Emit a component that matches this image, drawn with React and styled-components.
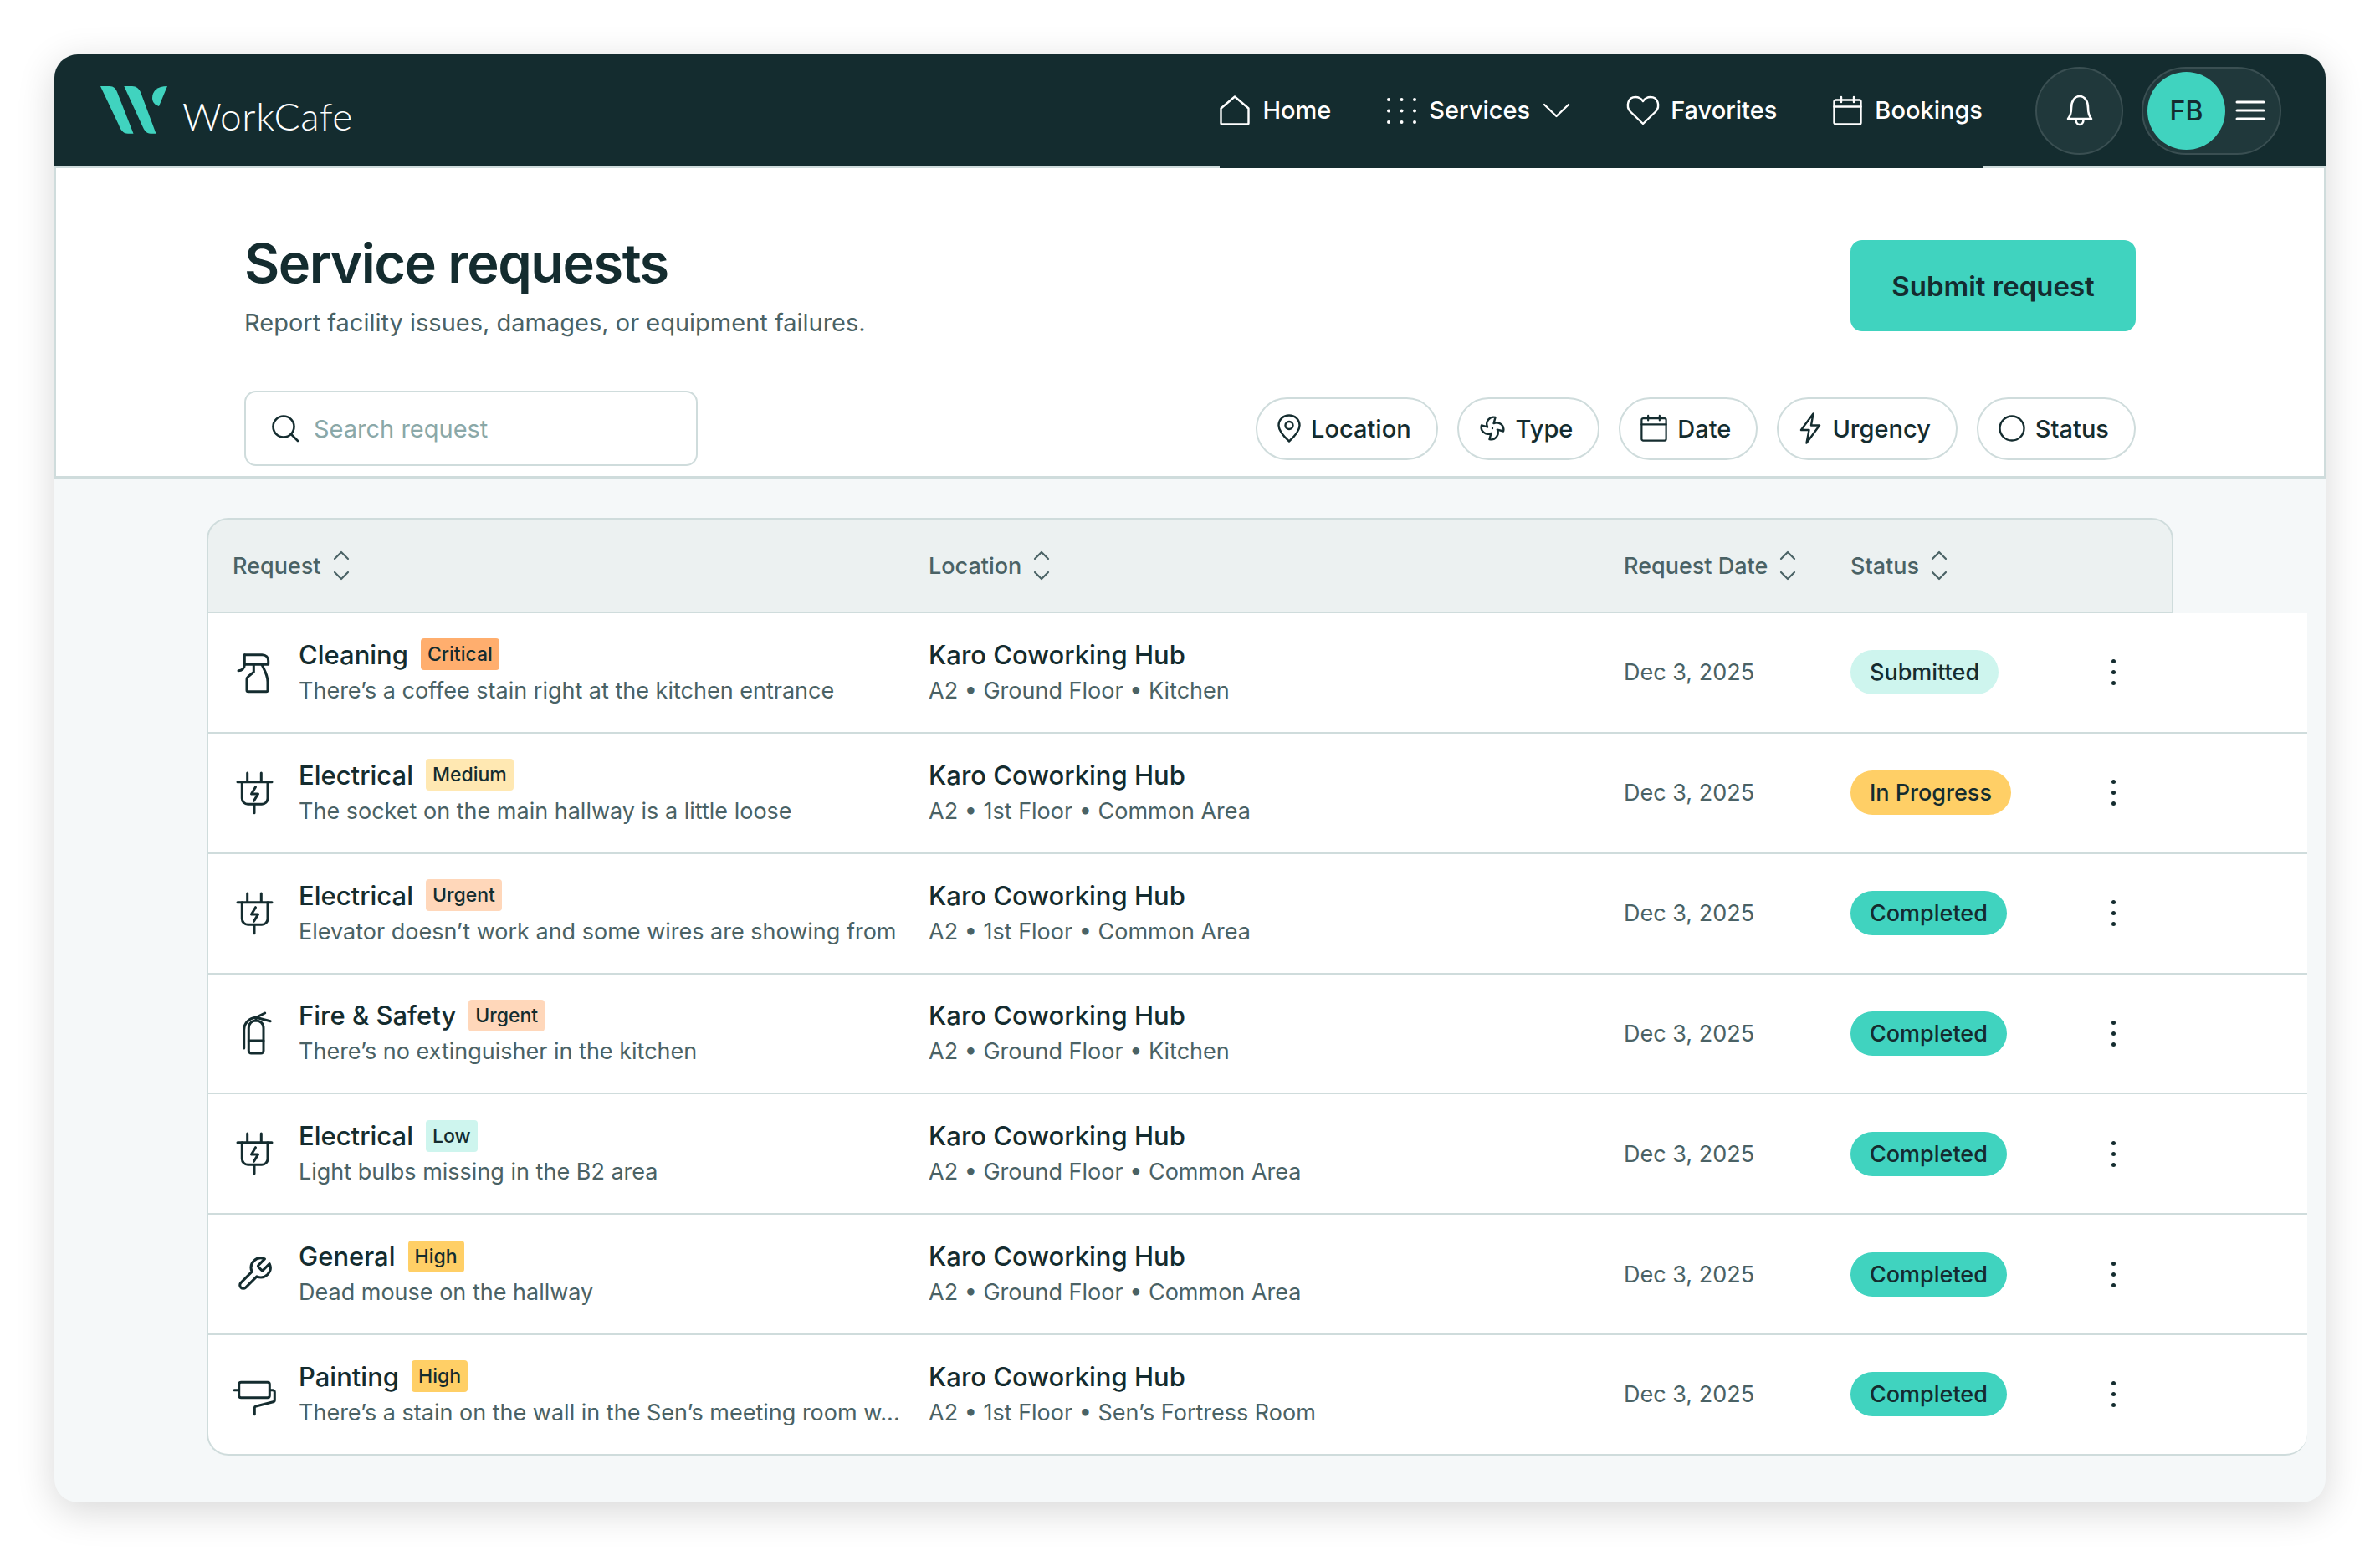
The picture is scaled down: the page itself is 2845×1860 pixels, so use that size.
import React from "react";
import styled, { createGlobalStyle } from "styled-components";

const DARK = "#142c2f";
const TEAL = "#40d3bf";
const GREY = "#4a6265";
const LINE = "#cfdcdc";

const Global = createGlobalStyle`
  html, body { margin: 0; padding: 0; background: #fff; }
  body { font-family: Inter, "Noto Sans", sans-serif; color: ${DARK}; width: 2845px; height: 1860px; overflow: hidden; }
  * { box-sizing: border-box; }
`;

const Page = styled.div`
  padding: 65px 65px 64px 65px;
`;
const Card = styled.div`
  width: 2715px;
  height: 1731px;
  border-radius: 28px;
  background: #f5f8f9;
  box-shadow: 0 10px 46px rgba(0, 0, 0, 0.16);
  display: flex;
  flex-direction: column;
`;
const Header = styled.header`
  height: 136px;
  background: ${DARK};
  border-radius: 28px 28px 0 0;
  border-bottom: 2px solid ${LINE};
  display: flex;
  align-items: center;
  padding: 0 53px 0 55px;
`;
const Brand = styled.div`
  display: flex;
  align-items: center;
  gap: 18px;
  margin-right: auto;
`;
const BrandName = styled.span`
  font-family: Lato, sans-serif;
  font-weight: 300;
  font-size: 46px;
  line-height: 58px;
  color: #fff;
  margin-top: 14px;
  letter-spacing: 0.6px;
`;
const Nav = styled.nav`
  display: flex;
  align-items: center;
  align-self: stretch;
  gap: 67px;
  margin-right: 63px;
  margin-bottom: -2px;
  border-bottom: 2px solid ${DARK};
`;
const NavItem = styled.a`
  display: flex;
  align-items: center;
  gap: ${(p) => p.$gap || 15}px;
  color: #fff;
  font-size: 29px;
  font-weight: 500;
  line-height: 40px;
`;
const IconBtn = styled.div`
  width: 105px;
  height: 105px;
  border-radius: 50%;
  background: #20383b;
  border: 2px solid #3a4f52;
  display: flex;
  align-items: center;
  justify-content: center;
  margin-right: 22px;
`;
const UserPill = styled.div`
  width: 167px;
  height: 105px;
  border-radius: 53px;
  background: #20383b;
  border: 2px solid #3a4f52;
  display: flex;
  align-items: center;
  padding-left: 5px;
  gap: 13px;
`;
const Avatar = styled.div`
  width: 93px;
  height: 93px;
  border-radius: 50%;
  background: ${TEAL};
  color: ${DARK};
  font-size: 32px;
  font-weight: 500;
  display: flex;
  align-items: center;
  justify-content: center;
`;
const Top = styled.section`
  height: 371px;
  background: #fff;
  border: solid ${LINE};
  border-width: 0 2px 3px 2px;
  padding: 86px 225px 0;
`;
const TitleRow = styled.div`
  display: flex;
  justify-content: space-between;
  align-items: flex-start;
`;
const Title = styled.h1`
  margin: 0;
  font-size: 65px;
  line-height: 56px;
  font-weight: 600;
  letter-spacing: -1.5px;
  color: ${DARK};
`;
const Subtitle = styled.p`
  margin: 23px 0 0;
  font-size: 29px;
  line-height: 40px;
  color: ${GREY};
`;
const SubmitButton = styled.button`
  width: 341px;
  height: 109px;
  border: 0;
  border-radius: 14px;
  background: ${TEAL};
  color: ${DARK};
  font-family: inherit;
  font-size: 33px;
  font-weight: 600;
`;
const Toolbar = styled.div`
  margin-top: 61px;
  display: flex;
  align-items: center;
  justify-content: space-between;
`;
const Search = styled.div`
  width: 542px;
  height: 90px;
  border: 2px solid ${LINE};
  border-radius: 14px;
  display: flex;
  align-items: center;
  padding-left: 30px;
  gap: 17px;
  font-size: 29px;
  color: #8aa8a8;
`;
const Filters = styled.div`
  display: flex;
  gap: 23px;
`;
const Filter = styled.div`
  height: 75px;
  border: 2px solid ${LINE};
  border-radius: 38px;
  display: flex;
  align-items: center;
  gap: 12px;
  padding: 0 30px 0 24px;
  font-size: 29px;
  font-weight: 500;
  color: ${DARK};
`;
const Body = styled.section`
  flex: 1;
  padding: 47px 22px 0 182px;
  display: flex;
  flex-direction: column;
`;
const COLUMNS = "832px 831px 271px 290px 1fr";
const TableHead = styled.div`
  width: 2351px;
  height: 114px;
  display: grid;
  grid-template-columns: ${COLUMNS};
  align-items: center;
  padding-left: 29px;
  background: #ecf1f1;
  border: 2px solid ${LINE};
  border-radius: 26px 26px 0 0;
`;
const HeadCell = styled.div`
  display: flex;
  align-items: center;
  gap: 14px;
  font-size: 27px;
  font-weight: 500;
  color: ${GREY};
`;
const Rows = styled.div`
  width: 2511px;
  background: #fff;
  border-radius: 0 0 26px 26px;
`;
const Row = styled.div`
  height: 143.85px;
  display: grid;
  grid-template-columns: ${COLUMNS};
  align-items: center;
  padding-left: 29px;
  border-left: 2px solid ${LINE};
  border-bottom: 2px solid ${LINE};
  &:last-child {
    border-radius: 0 0 0 26px;
    border-radius: 0 0 26px 26px;
  }
`;
const RequestCell = styled.div`
  display: flex;
  align-items: center;
  gap: 30px;
  margin-left: 3px;
`;
const IconSlot = styled.div`
  width: 46px;
  height: 50px;
  flex: none;
  display: flex;
  align-items: center;
  justify-content: center;
`;
const TextStack = styled.div`
  display: flex;
  flex-direction: column;
  min-width: 0;
`;
const TitleLine = styled.div`
  display: flex;
  align-items: center;
  gap: 15px;
  height: 41px;
  margin-bottom: 2px;
`;
const RowTitle = styled.span`
  font-size: 31px;
  font-weight: 500;
  color: ${DARK};
`;
const RowSub = styled.span`
  font-size: 27px;
  line-height: 41px;
  color: ${GREY};
  white-space: nowrap;
`;
const Badge = styled.span`
  height: 38px;
  padding: 0 8px;
  border-radius: 4px;
  font-size: 23px;
  font-weight: 500;
  display: flex;
  align-items: center;
  color: ${DARK};
  background: ${(p) => p.$bg};
`;
const DateCell = styled.div`
  font-size: 27px;
  color: ${GREY};
`;
const StatusPill = styled.span`
  display: inline-flex;
  align-items: center;
  height: 53px;
  padding: 0 23px;
  border-radius: 27px;
  font-size: 27px;
  font-weight: 500;
  color: ${DARK};
  background: ${(p) => p.$bg};
`;
const Kebab = styled.div`
  width: 8px;
  margin-left: 20px;
  display: flex;
  flex-direction: column;
  gap: 8px;
  align-items: center;
`;
const Dot = styled.i`
  width: 5px;
  height: 5px;
  border-radius: 50%;
  background: ${DARK};
`;

const Svg = ({ w = 46, h = 46, vw, vh, sw = 3, color = DARK, children }) => (
  <svg width={w} height={h} viewBox={`0 0 ${vw || w} ${vh || h}`} fill="none" stroke={color} strokeWidth={sw} strokeLinecap="round" strokeLinejoin="round" style={{ flex: "none", overflow: "visible" }}>
    {children}
  </svg>
);

const Logo = () => (
  <svg width="80" height="58" viewBox="0 0 80 58" fill={TEAL} style={{ flex: "none", marginTop: 0 }}>
    <path d="M0 0H11C16 0 18.500 3 20 7L39.500 56.700H33C27 56.700 24 52 21.700 45.700Z" />
    <path d="M28.300 0H38C43 0 46 3 48 7L66.500 56.700H60C55 56.700 52.500 53 50 47.300Z" />
    <path d="M80 0C68 0 62 6 62 14C62 19 65 22.500 70 24Z" />
  </svg>
);

const HomeIcon = () => (
  <Svg w={36} h={36} sw={2.4} color="#fff"><path d="M1.500 15.500L18 1.500L34.500 15.500V33.500A1 1 0 0 1 33.500 34.500H2.500A1 1 0 0 1 1.500 33.500Z" /></Svg>
);
const GridIcon = () => (
  <svg width="35" height="33" viewBox="0 0 35 33" fill="#fff" style={{ flex: "none" }}>
    {[2, 17.500, 33].flatMap((x) => [3, 16.500, 30].map((y) => <circle key={`${x}-${y}`} cx={x} cy={y} r="2" />))}
  </svg>
);
const ChevronDown = () => (
  <Svg w={33} h={20} sw={2.4} color="#fff"><path d="M2 3L16.500 17L31 3" /></Svg>
);
const HeartIcon = () => (
  <Svg w={40} h={36} sw={2.4} color="#fff"><path d="M20 34L5 19.500C-1 13 2 2 11 2C15 2 18 4 20 7C22 4 25 2 29 2C38 2 41 13 35 19.500Z" /></Svg>
);
const CalendarIcon = ({ color = "#fff", s = 35, sw = 2.4 }) => (
  <Svg w={s} h={s} vw={35} vh={35} sw={sw} color={color}>
    <rect x="1.500" y="4.500" width="32" height="29" rx="2" />
    <path d="M1.500 12.500H33.500M10 1V7M25 1V7" />
  </Svg>
);
const BellIcon = () => (
  <Svg w={34} h={38} sw={2.6} color="#fff">
    <path d="M3 29C6 25.500 7 22 7 16C7 8 11 2 17 2C23 2 27 8 27 16C27 22 28 25.500 31 29Z" />
    <path d="M12.500 30C12.500 33.500 14.500 36 17 36C19.500 36 21.500 33.500 21.500 30" />
  </Svg>
);
const MenuIcon = () => (
  <Svg w={34} h={26} sw={3} color="#fff"><path d="M1 3H33M1 13H33M1 23H33" /></Svg>
);
const SearchIcon = () => (
  <Svg w={34} h={34} sw={2.6}><circle cx="15" cy="15" r="12.500" /><path d="M24 24L32 32" /></Svg>
);
const PinIcon = () => (
  <Svg w={28} h={34} sw={2.4}><path d="M14 32.500C8 27 1.500 20.500 1.500 13.500C1.500 6.500 7 1.500 14 1.500C21 1.500 26.500 6.500 26.500 13.500C26.500 20.500 20 27 14 32.500Z" /><circle cx="14" cy="13.500" r="4.500" /></Svg>
);
const FanIcon = () => (
  <Svg w={32} h={32} vw={24} vh={24} sw={1.8}>
    <path d="M10.827 16.379a6.082 6.082 0 0 1-8.618-7.002l5.412 1.45a6.082 6.082 0 0 1 7.002-8.618l-1.45 5.412a6.082 6.082 0 0 1 8.618 7.002l-5.412-1.45a6.082 6.082 0 0 1-7.002 8.618l1.45-5.412Z" />
    <path d="M12 12v.01" />
  </Svg>
);
const BoltIcon = () => (
  <Svg w={28} h={38} sw={2.4}><path d="M17.500 1.500L3 21H12.500L9.500 36.500L25 15.500H15Z" /></Svg>
);
const RingIcon = () => (
  <Svg w={32} h={32} sw={2.4}><circle cx="16" cy="16" r="14.500" /></Svg>
);
const SortIcon = () => (
  <Svg w={20} h={36} sw={2.2} color={GREY}><path d="M2 10L10 2L18 10M2 26L10 34L18 26" /></Svg>
);

const SprayIcon = () => (
  <Svg>
    <path d="M11.300 1.700H32.300C37 1.700 39.700 5 39.700 9V13.300H12.300" />
    <path d="M11.300 1.700V14C11.300 18 8 20.700 4 20.700" />
    <path d="M22.300 13.300V22.300L16 27.500C14.700 28.500 14 30 14 31.500V44A1.700 1.700 0 0 0 15.700 45.700H37.300A1.700 1.700 0 0 0 39 44V34C39 26 35 20 32 13.300" />
  </Svg>
);
const PlugIcon = () => (
  <Svg h={50}>
    <path d="M14.700 1V11.700M31.300 1V11.700M3 11.700H44" />
    <path d="M8.300 11.700V31.300A7 7 0 0 0 15.300 38.300H32A7 7 0 0 0 39 31.300V11.700" />
    <path d="M23 38.300V48.700" />
    <path d="M24.500 17.700L19.500 26H27.500L22.500 34.300" />
  </Svg>
);
const ExtinguisherIcon = () => (
  <Svg h={50}>
    <path d="M16.300 44V19C16.300 13.500 20 10 25 10S34 13.500 34 19V46A3 3 0 0 1 31 49H19.300A3 3 0 0 1 16.300 46Z" />
    <path d="M16.300 34H34" />
    <path d="M10.700 43V21C10.700 13 17 7 25 6.300" />
    <path d="M35.700 1L25 6.300L42.300 10.700" />
    <path d="M25 6.300V10" />
  </Svg>
);
const WrenchIcon = () => (
  <Svg w={46} h={46} vw={24} vh={24} sw={1.6}>
    <path d="M14.700 6.300a1 1 0 0 0 0 1.400l1.600 1.600a1 1 0 0 0 1.400 0l3.770-3.770a6 6 0 0 1-7.940 7.940l-6.910 6.910a2.120 2.120 0 0 1-3-3l6.910-6.910a6 6 0 0 1 7.940-7.940l-3.760 3.760z" />
  </Svg>
);
const RollerIcon = () => (
  <Svg w={50} h={50}>
    <rect x="6.700" y="10.300" width="36.600" height="18.400" rx="2.500" />
    <path d="M1 19.700H6.700M43.300 19.700H47A2.300 2.300 0 0 1 49.300 22V31.500A2.300 2.300 0 0 1 47.500 33.800L27 39C26 39.300 25.300 40 25.300 41V48.700" />
  </Svg>
);

const BADGE = {
  Critical: "#ffae6e",
  Medium: "#ffe8b2",
  Urgent: "#ffd7ba",
  Low: "#cef5ee",
  High: "#ffcf66",
};
const STATUS = {
  Submitted: "#cef5ee",
  "In Progress": "#ffcf66",
  Completed: TEAL,
};

const rows = [
  { Icon: SprayIcon, title: "Cleaning", badge: "Critical", sub: "There’s a coffee stain right at the kitchen entrance", place: "A2 • Ground Floor • Kitchen", status: "Submitted" },
  { Icon: PlugIcon, title: "Electrical", badge: "Medium", sub: "The socket on the main hallway is a little loose", place: "A2 • 1st Floor • Common Area", status: "In Progress" },
  { Icon: PlugIcon, title: "Electrical", badge: "Urgent", sub: "Elevator doesn’t work and some wires are showing from", place: "A2 • 1st Floor • Common Area", status: "Completed" },
  { Icon: ExtinguisherIcon, title: "Fire & Safety", badge: "Urgent", sub: "There’s no extinguisher in the kitchen", place: "A2 • Ground Floor • Kitchen", status: "Completed" },
  { Icon: PlugIcon, title: "Electrical", badge: "Low", sub: "Light bulbs missing in the B2 area", place: "A2 • Ground Floor • Common Area", status: "Completed" },
  { Icon: WrenchIcon, title: "General", badge: "High", sub: "Dead mouse on the hallway", place: "A2 • Ground Floor • Common Area", status: "Completed" },
  { Icon: RollerIcon, title: "Painting", badge: "High", sub: "There’s a stain on the wall in the Sen’s meeting room w...", place: "A2 • 1st Floor • Sen’s Fortress Room", status: "Completed" },
];

export default function App() {
  return (
    <Page>
      <Global />
      <Card>
        <Header>
          <Brand>
            <Logo />
            <BrandName>WorkCafe</BrandName>
          </Brand>
          <Nav>
            <NavItem><HomeIcon />Home</NavItem>
            <NavItem><GridIcon />Services<ChevronDown /></NavItem>
            <NavItem $gap={13}><HeartIcon />Favorites</NavItem>
            <NavItem><CalendarIcon />Bookings</NavItem>
          </Nav>
          <IconBtn><BellIcon /></IconBtn>
          <UserPill>
            <Avatar>FB</Avatar>
            <MenuIcon />
          </UserPill>
        </Header>
        <Top>
          <TitleRow>
            <div>
              <Title>Service requests</Title>
              <Subtitle>Report facility issues, damages, or equipment failures.</Subtitle>
            </div>
            <SubmitButton>Submit request</SubmitButton>
          </TitleRow>
          <Toolbar>
            <Search><SearchIcon />Search request</Search>
            <Filters>
              <Filter><PinIcon />Location</Filter>
              <Filter><FanIcon />Type</Filter>
              <Filter><CalendarIcon color={DARK} s={32} />Date</Filter>
              <Filter><BoltIcon />Urgency</Filter>
              <Filter><RingIcon />Status</Filter>
            </Filters>
          </Toolbar>
        </Top>
        <Body>
          <TableHead>
            <HeadCell>Request<SortIcon /></HeadCell>
            <HeadCell>Location<SortIcon /></HeadCell>
            <HeadCell>Request Date<SortIcon /></HeadCell>
            <HeadCell>Status<SortIcon /></HeadCell>
          </TableHead>
          <Rows>
            {rows.map((r, i) => (
              <Row key={i}>
                <RequestCell>
                  <IconSlot><r.Icon /></IconSlot>
                  <TextStack>
                    <TitleLine>
                      <RowTitle>{r.title}</RowTitle>
                      <Badge $bg={BADGE[r.badge]}>{r.badge}</Badge>
                    </TitleLine>
                    <RowSub>{r.sub}</RowSub>
                  </TextStack>
                </RequestCell>
                <TextStack>
                  <TitleLine><RowTitle>Karo Coworking Hub</RowTitle></TitleLine>
                  <RowSub>{r.place}</RowSub>
                </TextStack>
                <DateCell>Dec 3, 2025</DateCell>
                <div><StatusPill $bg={STATUS[r.status]}>{r.status}</StatusPill></div>
                <Kebab><Dot /><Dot /><Dot /></Kebab>
              </Row>
            ))}
          </Rows>
        </Body>
      </Card>
    </Page>
  );
}
